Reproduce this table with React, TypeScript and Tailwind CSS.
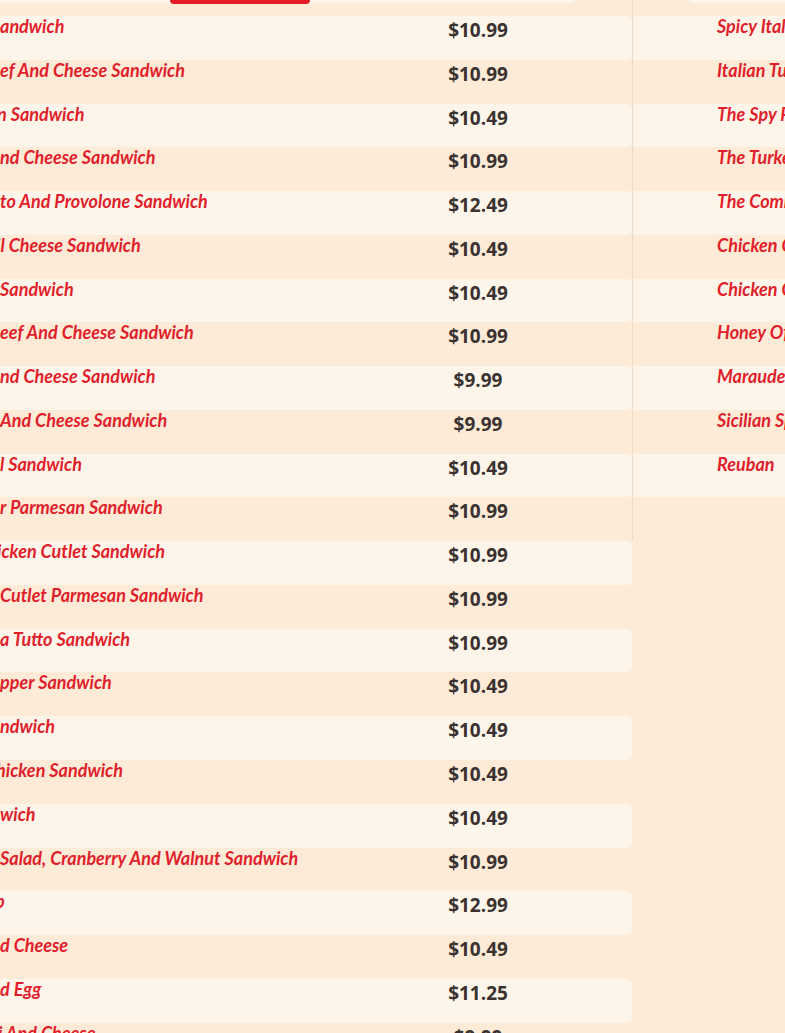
import React from "react";

type Item = { h: string; v: string; p: string; s: string };

const left: Item[] = [
  { h: "Turkey S", v: "andwich", p: "$10.99", s: "" },
  { h: "Roast Be", v: "ef And Cheese Sandwich", p: "$10.99", s: "" },
  { h: "Vegetaria", v: "n Sandwich", p: "$10.49", s: "ml-[-3px]" },
  { h: "Turkey A", v: "nd Cheese Sandwich", p: "$10.99", s: "" },
  { h: "Prosciut", v: "to And Provolone Sandwich", p: "$12.49", s: "" },
  { h: "Provel Bas", v: "il Cheese Sandwich", p: "$10.49", s: "ml-[-4px]" },
  { h: "Turkey ", v: "Sandwich", p: "$10.49", s: "" },
  { h: "Corned B", v: "eef And Cheese Sandwich", p: "$10.99", s: "" },
  { h: "Salami A", v: "nd Cheese Sandwich", p: "$9.99", s: "" },
  { h: "Bologna ", v: "And Cheese Sandwich", p: "$9.99", s: "" },
  { h: "Meatbal", v: "l Sandwich", p: "$10.49", s: "" },
  { h: "Burge", v: "r Parmesan Sandwich", p: "$10.99", s: "" },
  { h: "Fried Ch", v: "icken Cutlet Sandwich", p: "$10.99", s: "ml-[-3px]" },
  { h: "Chicken ", v: "Cutlet Parmesan Sandwich", p: "$10.99", s: "" },
  { h: "Mangi", v: "a Tutto Sandwich", p: "$10.99", s: "" },
  { h: "Cherry Pe", v: "pper Sandwich", p: "$10.49", s: "" },
  { h: "Veggie Sa", v: "ndwich", p: "$10.49", s: "" },
  { h: "Buffalo C", v: "hicken Sandwich", p: "$10.49", s: "ml-[-4px]" },
  { h: "BLT Sand", v: "wich", p: "$10.49", s: "" },
  { h: "Chicken ", v: "Salad, Cranberry And Walnut Sandwich", p: "$10.99", s: "" },
  { h: "Tuna Wra", v: "p", p: "$12.99", s: "ml-[-5px]" },
  { h: "Grille", v: "d Cheese", p: "$10.49", s: "" },
  { h: "Bacon An", v: "d Egg", p: "$11.25", s: "" },
  { h: "Salam", v: "i And Cheese", p: "$9.99", s: "ml-[-2px]" },
];

const right: string[] = [
  "Spicy Italian Sandwich",
  "Italian Tuna Sandwich",
  "The Spy Panini",
  "The Turkey Club",
  "The Combo",
  "Chicken Cutlet Sandwich",
  "Chicken Caesar Wrap",
  "Honey Of A Turkey",
  "Marauder",
  "Sicilian Special",
  "Reuban",
];

const nameCls =
  "font-['Lato',sans-serif] italic font-bold text-[18px] leading-[20px] text-[#e01f2c] whitespace-nowrap";
const priceCls =
  "font-['Open_Sans',sans-serif] font-bold text-[19px] leading-[24px] pt-[2px] text-[#3a3230] text-center";

export default function App() {
  return (
    <div className="w-[785px] h-[1033px] overflow-hidden bg-[#fdebd7]">
      <div className="flex ml-[-200px] w-[1300px] items-start">
        <div className="w-[832px] shrink-0">
          <div className="h-[16px] flex items-start">
            <div className="h-[3px] w-[370px] bg-[#fef5ea]" />
            <div className="h-[4px] w-[140px] bg-[#e31d25] rounded-b-[6px]" />
            <div className="h-[3px] w-[265px] bg-[#fef5ea] rounded-br-[4px]" />
          </div>
          {left.map((it, i) => (
            <div
              key={i}
              className={`h-[43.77px] flex items-start rounded-r-[5px] ${
                i % 2 === 0 ? "bg-[#fef5ea]" : ""
              }`}
            >
              <div className={`flex-1 min-w-0 flex ${nameCls}`}>
                <span className="w-[200px] shrink-0 flex justify-end">
                  <span className="shrink-0">{it.h}</span>
                </span>
                <span className={it.s}>{it.v}</span>
              </div>
              <div className={`w-[308px] shrink-0 ${priceCls}`}>{it.p}</div>
            </div>
          ))}
        </div>
        <div className="w-[400px] shrink-0 border-l border-[#ecdac6] pb-[43px]">
          <div className="h-[16px] pl-[57px] flex items-start">
            <div className="h-[3px] flex-1 bg-[#fef5ea] rounded-bl-[4px]" />
          </div>
          {right.map((n, i) => (
            <div
              key={i}
              className={`h-[43.77px] flex items-start ${
                i % 2 === 0 ? "bg-[#fef5ea]" : ""
              }`}
            >
              <div className={`pl-[84px] ${nameCls}`}>{n}</div>
            </div>
          ))}
        </div>
      </div>
    </div>
  );
}
